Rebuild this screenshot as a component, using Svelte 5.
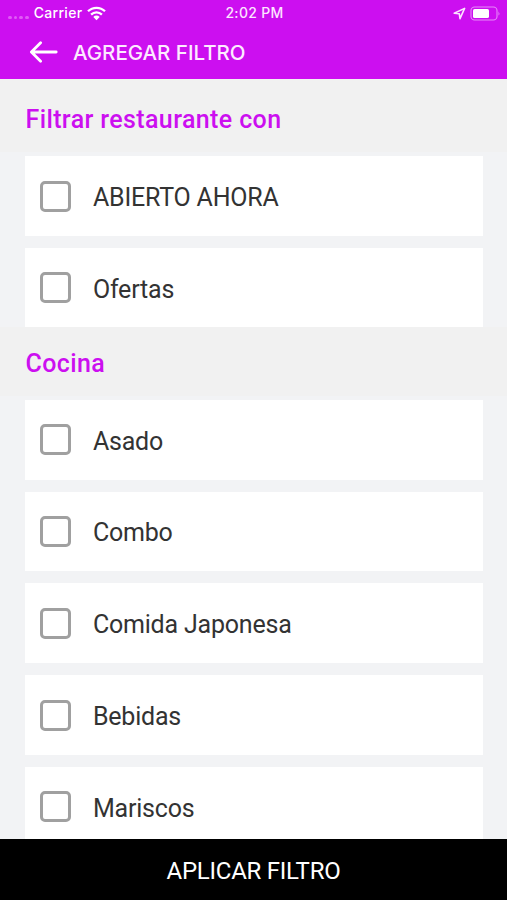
<script>
  const sections = [
    { title: 'Filtrar restaurante con', items: ['ABIERTO AHORA', 'Ofertas'] },
    { title: 'Cocina', items: ['Asado', 'Combo', 'Comida Japonesa', 'Bebidas', 'Mariscos'] },
  ];

  let selected = $state([]);
</script>

<div class="screen">
  <header>
    <div class="status">
      <div class="carrier">
        <span class="signal"><i></i><i></i><i></i><i></i></span>
        <span>Carrier</span>
        <svg class="wifi" width="19" height="15" viewBox="0 0 19 15">
          <g fill="none" stroke="#fff" stroke-width="2.3">
            <path d="M1 5.3a12.1 12.1 0 0 1 17 0" />
            <path d="M4.1 8.6a7.7 7.7 0 0 1 10.8 0" />
          </g>
          <path d="M6.3 10.9a4.5 4.5 0 0 1 6.4 0L9.5 14.2z" fill="#fff" />
        </svg>
      </div>
      <span class="time">2:02 PM</span>
      <div class="power">
        <svg width="13" height="13" viewBox="0 0 13 13">
          <path d="M1.2 6.3 11.6 1.4 7 11.7 6.3 6.8z" fill="none" stroke="#fbe2ff" stroke-width="1.6" stroke-linejoin="round" />
        </svg>
        <svg width="31" height="15" viewBox="0 0 31 15">
          <rect x="1" y="1" width="26" height="13" rx="3.6" fill="none" stroke="#e68bf8" stroke-width="1.1" />
          <rect x="3" y="3" width="16" height="9" rx="1.6" fill="#fff" />
          <path d="M28.5 5.2q1.8 2.3 0 4.6z" fill="#e68bf8" />
        </svg>
      </div>
    </div>
    <div class="toolbar">
      <button class="back" aria-label="Volver">
        <svg width="29" height="22" viewBox="0 0 29 22">
          <path d="M11.6 1.8 2.4 11l9.2 9.2M2.8 11h24.4" fill="none" stroke="#fff" stroke-width="2.8" stroke-linecap="round" stroke-linejoin="round" />
        </svg>
      </button>
      <h1>AGREGAR FILTRO</h1>
    </div>
  </header>

  <main>
    {#each sections as section}
      <section>
        <h2>{section.title}</h2>
        <div class="list">
          {#each section.items as item}
            <label>
              <input type="checkbox" value={item} bind:group={selected} />
              <span>{item}</span>
            </label>
          {/each}
        </div>
      </section>
    {/each}
  </main>

  <button class="apply">APLICAR FILTRO</button>
</div>

<style>
  :global(body) {
    margin: 0;
  }

  .screen {
    display: flex;
    flex-direction: column;
    height: 100vh;
    overflow: hidden;
    background: #f2f3f5;
    font-family: Roboto, sans-serif;
  }

  header {
    flex: none;
    height: 79px;
    background: #cc0ff0;
    color: #fff;
  }

  .status {
    display: grid;
    grid-template-columns: 1fr auto 1fr;
    align-items: center;
    height: 26px;
    padding: 0 6px 0 8px;
    font: 500 14px/26px Inter, sans-serif;
    letter-spacing: 0.3px;
  }

  .carrier,
  .signal,
  .power {
    display: flex;
    align-items: center;
  }

  .signal {
    gap: 2px;
    margin: 9px 5px 0 0;
  }

  .signal i {
    width: 3.7px;
    height: 3.7px;
    border-radius: 50%;
    background: #e05bf5;
  }

  .wifi {
    margin-left: 5px;
  }

  .time {
    color: #fce5ff;
  }

  .power {
    justify-content: flex-end;
    gap: 4px;
  }

  .toolbar {
    display: flex;
    align-items: center;
    height: 52px;
    padding-left: 29px;
  }

  button {
    border: 0;
    padding: 0;
    font-family: inherit;
    color: #fff;
  }

  .back {
    display: flex;
    background: none;
  }

  h1 {
    margin: 1px 0 0 15px;
    font: 500 20.5px/24px Inter, sans-serif;
    color: #fdeaff;
  }

  main {
    flex: 1;
    min-height: 0;
    overflow: hidden;
    padding-top: 4.4px;
    background: linear-gradient(#f1f1f1 8px, #f2f3f5 8px);
  }

  h2 {
    box-sizing: border-box;
    height: 72.6px;
    margin: 0;
    padding: 0 25.5px;
    background: linear-gradient(#f1f1f1 68.6px, #f2f3f5 68.6px);
    font-size: 25px;
    font-weight: 500;
    line-height: 73px;
    letter-spacing: 0.38px;
    color: #cc0ff0;
  }

  .list {
    display: flex;
    flex-direction: column;
    gap: 12px;
    padding: 0 24.5px 0 25px;
  }

  label {
    display: flex;
    align-items: center;
    height: 79.7px;
    padding-left: 15.4px;
    background: #fff;
    font-size: 25px;
    letter-spacing: -0.2px;
    color: #333;
  }

  label span {
    padding-top: 3px;
  }

  input {
    appearance: none;
    box-sizing: border-box;
    width: 31px;
    height: 31px;
    margin: 0.4px 21.5px 0 0;
    border: 3px solid #a0a0a0;
    border-radius: 5px;
    background: #fff;
  }

  input:checked {
    border-color: #cc0ff0;
    background: #cc0ff0;
  }

  .apply {
    flex: none;
    height: 61px;
    padding-top: 2px;
    background: #000;
    font-size: 24px;
    letter-spacing: -0.25px;
  }
</style>
